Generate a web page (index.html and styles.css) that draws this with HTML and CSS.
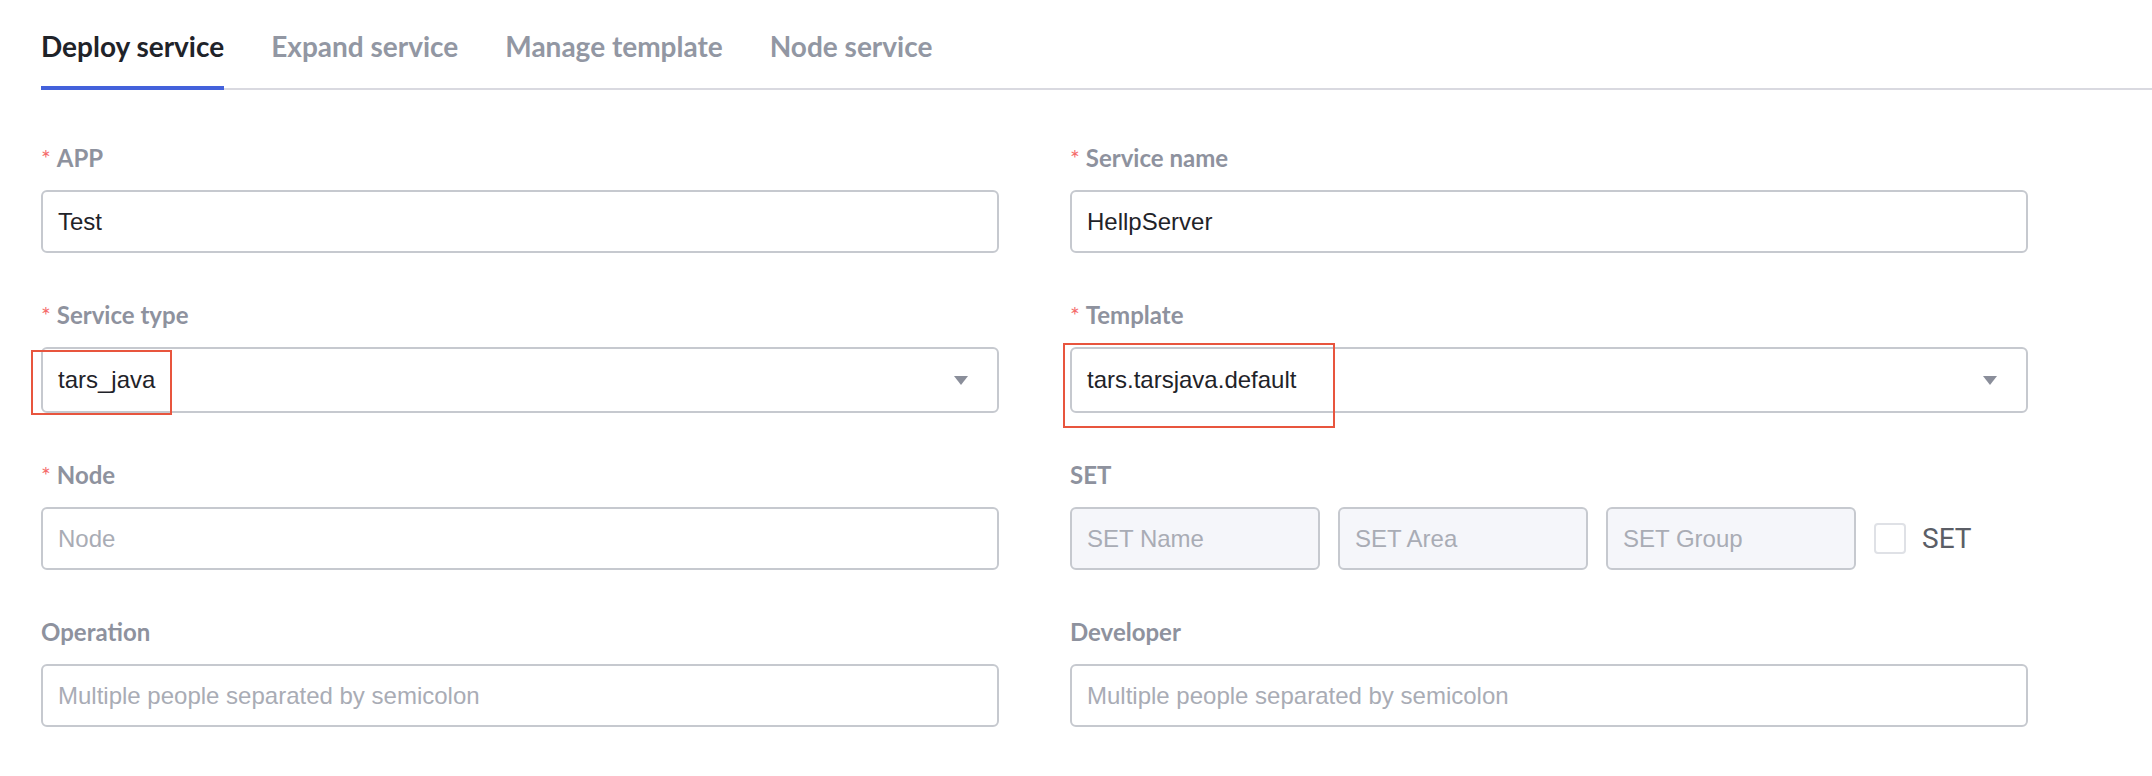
FILE: index.html
```html
<!DOCTYPE html>
<html lang="en">
<head>
<meta charset="utf-8">
<title>Deploy service</title>
<link rel="stylesheet" href="styles.css">
</head>
<body>
<div class="page">
  <div class="tabs">
    <div class="tab active">Deploy service</div>
    <div class="tab">Expand service</div>
    <div class="tab">Manage template</div>
    <div class="tab">Node service</div>
  </div>
  <div class="form">
    <div class="item">
      <div class="label req">APP</div>
      <div class="control">Test</div>
    </div>
    <div class="item">
      <div class="label req">Service name</div>
      <div class="control">HellpServer</div>
    </div>
    <div class="item marked">
      <div class="label req">Service type</div>
      <div class="control select"><span>tars_java</span><i class="arrow"></i></div>
      <div class="mark mark-type"></div>
    </div>
    <div class="item marked">
      <div class="label req">Template</div>
      <div class="control select"><span>tars.tarsjava.default</span><i class="arrow"></i></div>
      <div class="mark mark-template"></div>
    </div>
    <div class="item">
      <div class="label req">Node</div>
      <div class="control placeholder">Node</div>
    </div>
    <div class="item">
      <div class="label">SET</div>
      <div class="setrow">
        <div class="control placeholder disabled small">SET Name</div>
        <div class="control placeholder disabled small">SET Area</div>
        <div class="control placeholder disabled small">SET Group</div>
        <span class="checkbox"></span>
        <span class="check-label">SET</span>
      </div>
    </div>
    <div class="item">
      <div class="label">Operation</div>
      <div class="control placeholder">Multiple people separated by semicolon</div>
    </div>
    <div class="item">
      <div class="label">Developer</div>
      <div class="control placeholder">Multiple people separated by semicolon</div>
    </div>
  </div>
</div>
</body>
</html>
```

FILE: styles.css
```css
html, body {
  margin: 0;
  padding: 0;
  background: #ffffff;
}

body {
  font-family: Lato, "Liberation Sans", sans-serif;
  color: #1f2329;
}

.page {
  padding: 30px 0 0 41px;
}

.tabs {
  display: flex;
  gap: 47px;
  border-bottom: 2px solid #d9d9e0;
}

.tab {
  position: relative;
  font-family: Lato, sans-serif;
  font-weight: 700;
  font-size: 28px;
  line-height: 32px;
  color: #9297a3;
  padding-bottom: 26px;
  white-space: nowrap;
}

.tab.active {
  color: #1f2329;
}

.tab.active::after {
  content: "";
  position: absolute;
  left: 0;
  right: 0;
  bottom: -2px;
  height: 4px;
  background: #4361db;
}

.form {
  display: grid;
  grid-template-columns: 958px 958px;
  column-gap: 71px;
  margin-top: 56px;
}

.item {
  position: relative;
  margin-bottom: 50px;
}

.label {
  height: 24px;
  font-family: Lato, sans-serif;
  font-weight: 700;
  font-size: 24px;
  line-height: 24px;
  color: #8e929e;
  margin-bottom: 20px;
  white-space: nowrap;
}

.label.req::before {
  content: "*";
  color: #f56c6c;
  font-weight: 400;
  font-size: 23px;
  line-height: 0;
  margin-right: 6px;
}

.control {
  box-sizing: border-box;
  height: 63px;
  border: 2px solid #c6c9cf;
  border-radius: 6px;
  padding: 0 15px;
  display: flex;
  align-items: center;
  font-family: "Liberation Sans", Arial, sans-serif;
  font-size: 24px;
  color: #1f2329;
  background: #ffffff;
  white-space: nowrap;
}

.control.placeholder {
  color: #a9acb5;
}

.control.select {
  height: 66px;
  padding-right: 29px;
}

.arrow {
  margin-left: auto;
  width: 0;
  height: 0;
  border-left: 7px solid transparent;
  border-right: 7px solid transparent;
  border-top: 9px solid #8a8e9a;
}

.setrow {
  display: flex;
  align-items: center;
  gap: 18px;
}

.control.small {
  width: 250px;
  flex: none;
}

.control.disabled {
  background: #f5f6fa;
}

.checkbox {
  box-sizing: border-box;
  width: 32px;
  height: 31px;
  border: 2px solid #dfe1e6;
  border-radius: 4px;
  background: #ffffff;
  flex: none;
}

.check-label {
  font-family: Roboto, "Liberation Sans", sans-serif;
  font-size: 28px;
  color: #5b5e66;
  margin-left: -2px;
}

.mark {
  position: absolute;
  box-sizing: border-box;
  border: 2px solid #e8553e;
  pointer-events: none;
}

.mark-type {
  left: -10px;
  top: 47px;
  width: 141px;
  height: 65px;
}

.mark-template {
  left: -7px;
  top: 40px;
  width: 272px;
  height: 85px;
}
```
